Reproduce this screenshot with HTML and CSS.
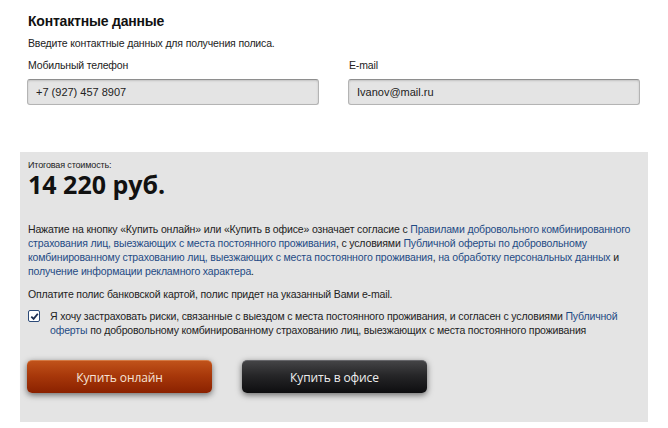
FILE: index.html
```html
<!DOCTYPE html>
<html lang="ru">
<head>
    <meta charset="UTF-8">
    <meta name="viewport" content="width=device-width, initial-scale=1.0">
    <title>Контактные данные</title>
    <link rel="stylesheet" href="styles.css">
</head>
<body>
    <div class="page">
        <section class="contacts">
            <h2>Контактные данные</h2>
            <p class="hint">Введите контактные данных для получения полиса.</p>

            <div class="fields">
                <div class="field">
                    <label for="phone">Мобильный телефон</label>
                    <input id="phone" type="text" value="+7 (927) 457 8907">
                </div>
                <div class="field">
                    <label for="email">E-mail</label>
                    <input id="email" type="text" value="Ivanov@mail.ru">
                </div>
            </div>
        </section>

        <section class="summary">
            <div class="total-label">Итоговая стоимость:</div>
            <div class="total">14 220 руб.</div>

            <p class="terms">
                Нажатие на кнопку «Купить онлайн» или «Купить в офисе» означает согласие с <a href="#">Правилами добровольного комбинированного страхования лиц, выезжающих с места постоянного проживания</a>, с условиями <a href="#">Публичной оферты по добровольному комбинированному страхованию лиц, выезжающих с места постоянного проживания</a>, <a href="#">на обработку персональных данных</a> и <a href="#">получение информации рекламного характера</a>.
            </p>

            <p class="pay-note">Оплатите полис банковской картой, полис придет на указанный Вами e-mail.</p>

            <label class="agree">
                <span class="checkbox">
                    <svg width="9" height="9" viewBox="0 0 9 9">
                        <path d="M1.3 4.6 L3.6 6.9 L7.8 1.8" fill="none" stroke="#1d2f52" stroke-width="1.8"/>
                    </svg>
                </span>
                <span class="agree-text">Я хочу застраховать риски, связанные с выездом с места постоянного проживания, и согласен с условиями <a href="#">Публичной оферты</a> по добровольному комбинированному страхованию лиц, выезжающих с места постоянного проживания</span>
            </label>

            <div class="actions">
                <button class="btn btn-online">Купить онлайн</button>
                <button class="btn btn-office">Купить в офисе</button>
            </div>
        </section>
    </div>
</body>
</html>
```

FILE: styles.css
```css
* {
    margin: 0;
    padding: 0;
    box-sizing: border-box;
}

body {
    font-family: "Liberation Sans", Arial, sans-serif;
    font-size: 10.5px;
    letter-spacing: -0.15px;
    line-height: 14px;
    color: #222;
    background: #fff;
}

a {
    color: #1f4b85;
    text-decoration: none;
}

.page {
    padding: 12px 20px 6px;
}

/* Contact block */

.contacts {
    padding: 0 8px 47px;
}

.contacts h2 {
    font-size: 14px;
    letter-spacing: -0.2px;
    line-height: 18px;
    font-weight: bold;
    color: #111;
    margin-bottom: 6px;
}

.hint {
    margin-bottom: 8px;
}

.fields {
    display: grid;
    grid-template-columns: 292px 292px;
    column-gap: 29px;
    margin-left: -1px;
}

.field label {
    display: block;
    padding-left: 1px;
    margin-bottom: 7px;
}

.field input {
    display: block;
    width: 100%;
    height: 26px;
    padding: 0 8px;
    font-family: "Liberation Sans", Arial, sans-serif;
    font-size: 11px;
    color: #222;
    background: #e4e4e4;
    border: 1px solid #b4b4b4;
    border-top-color: #8e8e8e;
    border-radius: 3px;
    box-shadow: inset 0 1px 2px rgba(0, 0, 0, 0.15);
    outline: none;
}

/* Summary block */

.summary {
    background: #e4e4e4;
    padding: 7px 16px 29px 8px;
}

.total-label {
    font-size: 9px;
    line-height: 12px;
}

.total {
    font-family: "Open Sans", sans-serif;
    font-weight: bold;
    font-size: 25px;
    letter-spacing: 0;
    line-height: 26px;
    color: #111;
    margin-bottom: 25px;
}

.terms {
    margin-bottom: 9px;
}

.pay-note {
    margin-bottom: 8px;
}

.agree {
    display: flex;
    align-items: flex-start;
    gap: 10px;
    margin-bottom: 23px;
}

.checkbox {
    flex: none;
    width: 12px;
    height: 12px;
    margin-top: 1px;
    display: flex;
    align-items: center;
    justify-content: center;
    background: #fff;
    border: 1.5px solid #2c4a78;
    border-radius: 2px;
}

.agree-text {
    padding-right: 14px;
}

.actions {
    display: flex;
    gap: 30px;
    margin-left: -1px;
}

.btn {
    width: 185px;
    height: 33px;
    border: none;
    border-radius: 5px;
    font-family: "Open Sans", sans-serif;
    font-size: 12px;
    letter-spacing: -0.1px;
    cursor: pointer;
    box-shadow: 0 2px 6px rgba(0, 0, 0, 0.55);
}

.btn-online {
    color: #f6e4d6;
    background: linear-gradient(to bottom, #c0521a 0%, #a8380a 45%, #8a2100 100%);
    border-top: 1px solid #d47a45;
}

.btn-office {
    color: #eee;
    background: linear-gradient(to bottom, #444446 0%, #262628 45%, #0d0d0f 100%);
    border-top: 1px solid #66666a;
}
```
